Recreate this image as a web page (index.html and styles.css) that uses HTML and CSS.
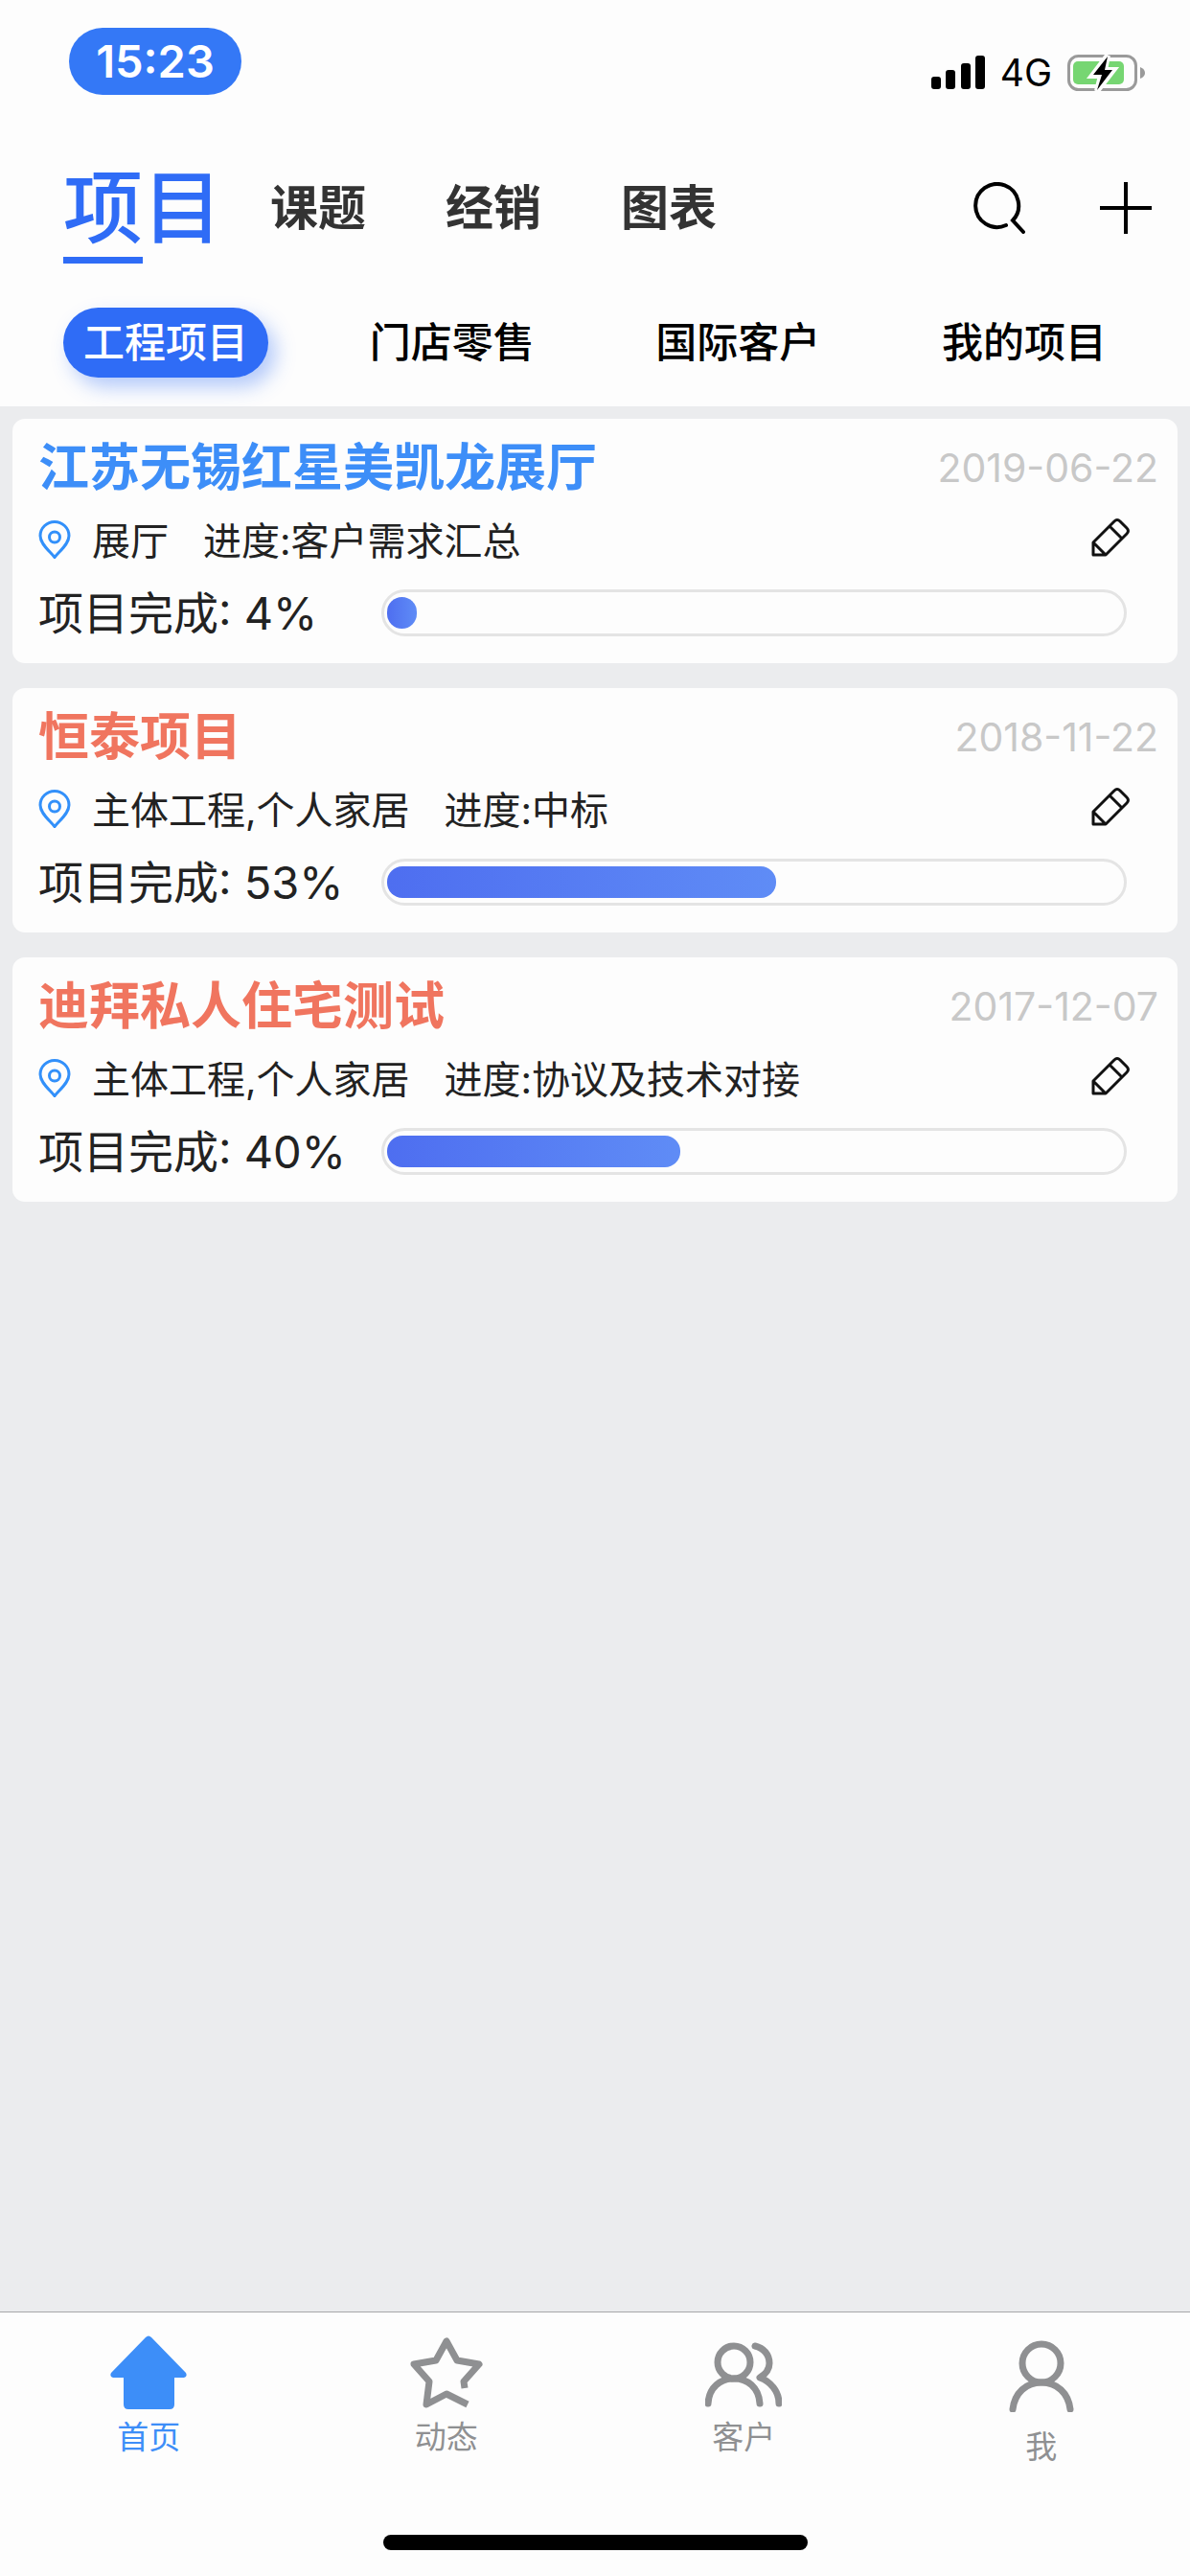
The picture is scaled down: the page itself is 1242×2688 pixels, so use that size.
FILE: index.html
```html
<!DOCTYPE html>
<html lang="zh-CN">
<head>
  <meta charset="UTF-8" />
  <meta name="viewport" content="width=device-width, initial-scale=1.0" />
  <title>项目</title>
  <link rel="stylesheet" href="styles.css">
</head>
<body>
  <!-- shared icons -->
  <svg class="sprite" aria-hidden="true">
    <symbol id="icon-pin" viewBox="0 0 34 40">
      <path d="M17 38.5C12 32 2 25 2 16a15 14.5 0 0 1 30 0C32 25 22 32 17 38.5Z"/>
      <circle cx="17" cy="17.5" r="5.5"/>
    </symbol>
    <symbol id="icon-edit" viewBox="0 0 40 40">
      <path d="M2 25 24 3Q27 0 30 3L37 10Q40 13 37 16L15 38H2ZM19 8 32 21M2 25 15 38"/>
    </symbol>
  </svg>

  <header class="header">
    <div class="status-bar">
      <span class="clock">15:23</span>
      <div class="status-icons">
        <svg class="signal" width="56" height="36" viewBox="0 0 56 36" aria-hidden="true">
          <rect x="0" y="22" width="10" height="13" rx="3"/>
          <rect x="15" y="15" width="10" height="20" rx="3"/>
          <rect x="31" y="8" width="10" height="27" rx="3"/>
          <rect x="46" y="0" width="10" height="35" rx="3"/>
        </svg>
        <span class="network">4G</span>
        <svg width="82" height="38" viewBox="0 0 82 38" aria-hidden="true">
          <rect x="1.5" y="1.5" width="70" height="35" rx="10" fill="none" stroke="#9a9a9a" stroke-width="3"/>
          <path d="M76 13q5 2 5 6t-5 6Z" fill="#9a9a9a"/>
          <rect x="6" y="7" width="53" height="24" rx="5" fill="#76d672"/>
          <path d="M42 1 26 22h9l-4 16 17-22h-9Z" fill="#000" stroke="#fdfdfd" stroke-width="6"/>
          <path d="M42 2 27 21h9l-5 16 16-21h-8Z" fill="#000"/>
        </svg>
      </div>
    </div>

    <div class="title-row">
      <nav class="tabs">
        <a class="tab active" href="#project">项目</a>
        <a class="tab" href="#topic">课题</a>
        <a class="tab" href="#dealer">经销</a>
        <a class="tab" href="#chart">图表</a>
      </nav>
      <div class="actions">
        <button class="icon-button" type="button" aria-label="搜索">
          <svg width="54" height="54" viewBox="0 0 54 54"><path d="M34 45A22.5 22.5 0 1 1 41 40L52 52"/></svg>
        </button>
        <button class="icon-button" type="button" aria-label="新增">
          <svg width="54" height="54" viewBox="0 0 54 54"><path d="M27 0V54M0 27H54"/></svg>
        </button>
      </div>
    </div>

    <div class="filters">
      <button class="filter active" type="button">工程项目</button>
      <button class="filter" type="button">门店零售</button>
      <button class="filter" type="button">国际客户</button>
      <button class="filter" type="button">我的项目</button>
    </div>
  </header>

  <main class="list">
    <article class="card">
      <div class="card-head">
        <h2 class="card-title blue">江苏无锡红星美凯龙展厅</h2>
        <time class="date" datetime="2019-06-22">2019-06-22</time>
      </div>
      <div class="card-info">
        <svg class="pin" aria-hidden="true"><use href="#icon-pin"/></svg>
        <span>展厅</span>
        <span>进度:客户需求汇总</span>
        <button class="edit" type="button" aria-label="编辑"><svg><use href="#icon-edit"/></svg></button>
      </div>
      <div class="card-progress">
        <span class="percent">项目完成: 4%</span>
        <div class="track" role="progressbar" aria-label="项目完成" aria-valuenow="4">
          <div class="fill" style="width: 4%"></div>
        </div>
      </div>
    </article>

    <article class="card">
      <div class="card-head">
        <h2 class="card-title">恒泰项目</h2>
        <time class="date" datetime="2018-11-22">2018-11-22</time>
      </div>
      <div class="card-info">
        <svg class="pin" aria-hidden="true"><use href="#icon-pin"/></svg>
        <span>主体工程,个人家居</span>
        <span>进度:中标</span>
        <button class="edit" type="button" aria-label="编辑"><svg><use href="#icon-edit"/></svg></button>
      </div>
      <div class="card-progress">
        <span class="percent">项目完成: 53%</span>
        <div class="track" role="progressbar" aria-label="项目完成" aria-valuenow="53">
          <div class="fill" style="width: 53%"></div>
        </div>
      </div>
    </article>

    <article class="card">
      <div class="card-head">
        <h2 class="card-title">迪拜私人住宅测试</h2>
        <time class="date" datetime="2017-12-07">2017-12-07</time>
      </div>
      <div class="card-info">
        <svg class="pin" aria-hidden="true"><use href="#icon-pin"/></svg>
        <span>主体工程,个人家居</span>
        <span>进度:协议及技术对接</span>
        <button class="edit" type="button" aria-label="编辑"><svg><use href="#icon-edit"/></svg></button>
      </div>
      <div class="card-progress">
        <span class="percent">项目完成: 40%</span>
        <div class="track" role="progressbar" aria-label="项目完成" aria-valuenow="40">
          <div class="fill" style="width: 40%"></div>
        </div>
      </div>
    </article>
  </main>

  <footer class="footer">
    <nav class="tab-bar">
      <a class="bar-item active" href="#home">
        <svg width="80" height="80" viewBox="0 0 80 80"><path d="M37 2Q40-1 43 2L79 39Q81 43 77 44H67V72Q67 77 62 77H19Q14 77 14 72V44H3Q-1 43 1 39Z" fill="currentColor" stroke="none"/></svg>
        <span>首页</span>
      </a>
      <a class="bar-item" href="#news">
        <svg width="80" height="80" viewBox="0 0 80 80"><path d="M59 55 58 48 74 30 51 26 40 6 29 26 6 30 22 48 19 72 40 61 62 72" stroke-linecap="butt"/></svg>
        <span>动态</span>
      </a>
      <a class="bar-item" href="#customer">
        <svg width="80" height="80" viewBox="0 0 80 80"><circle cx="30" cy="28" r="17"/><path d="M3 71C4 54 16 45 30 45S56 54 57 71M52 11C61 13 67 20 67 29 67 36 62 41 57 44 68 48 77 58 77 71"/></svg>
        <span>客户</span>
      </a>
      <a class="bar-item me" href="#me">
        <svg width="80" height="80" viewBox="0 0 80 80"><circle cx="40" cy="29" r="20"/><path d="M10 77C12 60 24 49 40 49S68 60 70 77"/></svg>
        <span>我</span>
      </a>
    </nav>
    <div class="home-indicator"></div>
  </footer>
</body>
</html>
```
FILE: styles.css
```css
* {
  margin: 0;
  padding: 0;
  box-sizing: border-box;
}

body {
  font-family: Inter, "Noto Sans CJK SC", sans-serif;
  color: #222;
  background-color: #ebecee;
  min-height: 100vh;
  display: flex;
  flex-direction: column;
}

a {
  color: inherit;
  text-decoration: none;
}

button {
  font: inherit;
  color: inherit;
  background: none;
  border: none;
  cursor: pointer;
}

svg {
  display: block;
}

.sprite {
  display: none;
}

/* header */

.header {
  background: #fdfdfd;
  padding-bottom: 30px;
}

.status-bar {
  display: flex;
  justify-content: space-between;
  align-items: flex-start;
  height: 132px;
  padding: 29px 46px 0 72px;
}

.clock {
  width: 180px;
  line-height: 70px;
  border-radius: 35px;
  background: #3478f6;
  color: #fff;
  font-size: 47px;
  font-weight: 600;
  text-align: center;
}

.status-icons {
  display: flex;
  align-items: center;
  gap: 16px;
  padding-top: 28px;
  color: #000;
}

.network {
  font-size: 39px;
  line-height: 38px;
}

.title-row {
  display: flex;
  justify-content: space-between;
  align-items: center;
  margin-top: 27px;
  padding: 0 40px 0 66px;
}

.tabs {
  display: flex;
  align-items: center;
  gap: 83px;
}

.tab {
  color: #333;
  font-size: 50px;
  font-weight: 700;
  line-height: 96px;
}

.tab.active {
  color: #2f6cf6;
  font-size: 83px;
  font-weight: 500;
  margin-right: -33px;
  padding-top: 10px;
}

.tab.active::after {
  content: '';
  display: block;
  width: 50%;
  height: 7px;
  margin-top: 3px;
  background: #2f6cf6;
}

.actions {
  display: flex;
  gap: 78px;
}

.icon-button svg {
  fill: none;
  stroke: #000;
  stroke-width: 4;
  stroke-linecap: round;
}

.filters {
  display: flex;
  justify-content: space-between;
  margin-top: 46px;
  padding: 0 66px;
}

.filter {
  padding: 0 21px;
  border-radius: 37px;
  color: #000;
  font-size: 43px;
  font-weight: 500;
  line-height: 73px;
}

.filter.active {
  color: #fff;
  background: #2f6cf6;
  box-shadow: 8px 10px 20px rgba(47, 108, 246, 0.35);
}

/* project cards */

.list {
  flex: 1;
  display: flex;
  flex-direction: column;
  gap: 26px;
  padding: 13px;
}

.card {
  background: #fdfdfd;
  border-radius: 13px;
  padding: 14px 20px 14px 27px;
}

.card-head {
  display: flex;
  justify-content: space-between;
  align-items: center;
}

.card-title {
  color: #f0755f;
  font-size: 53px;
  font-weight: 700;
  line-height: 74px;
}

.card-title.blue {
  color: #3d8ef8;
}

.date {
  color: #c8c8c8;
  font-size: 41px;
}

.card-info {
  display: flex;
  align-items: center;
  gap: 36px;
  height: 76px;
  font-size: 40px;
}

.card-info span {
  padding-bottom: 3px;
}

.pin {
  width: 34px;
  height: 40px;
  margin-right: -14px;
  fill: none;
  stroke: #3290fa;
  stroke-width: 3;
}

.edit {
  margin-left: auto;
  margin-right: 30px;
  padding-bottom: 5px;
}

.edit svg {
  width: 40px;
  height: 40px;
  fill: none;
  stroke: #111;
  stroke-width: 3;
  stroke-linejoin: round;
}

.card-progress {
  display: flex;
  align-items: center;
  height: 77px;
  padding-right: 33px;
}

.percent {
  width: 358px;
  padding-bottom: 6px;
  font-size: 47px;
}

.track {
  flex: 1;
  height: 49px;
  padding: 5px 3px;
  border: 3px solid #e4e4e4;
  border-radius: 25px;
}

.fill {
  height: 100%;
  border-radius: 16px;
  background: linear-gradient(90deg, #4e6ef0, #5f8cf6);
}

/* bottom bar */

.footer {
  background: #fdfdfd;
  border-top: 1px solid #a7a7aa;
  padding-bottom: 27px;
}

.tab-bar {
  display: flex;
  height: 232px;
  padding-top: 24px;
}

.bar-item {
  flex: 1;
  display: flex;
  flex-direction: column;
  align-items: center;
  gap: 6px;
  color: #8f9092;
  font-size: 33px;
  line-height: 40px;
}

.bar-item.active {
  color: #3d8ef8;
}

.bar-item.me {
  gap: 16px;
}

.bar-item svg {
  fill: none;
  stroke: currentColor;
  stroke-width: 7;
  stroke-linecap: round;
  stroke-linejoin: round;
}

.home-indicator {
  width: 443px;
  height: 16px;
  margin: 0 auto;
  border-radius: 8px;
  background: #000;
}
```
